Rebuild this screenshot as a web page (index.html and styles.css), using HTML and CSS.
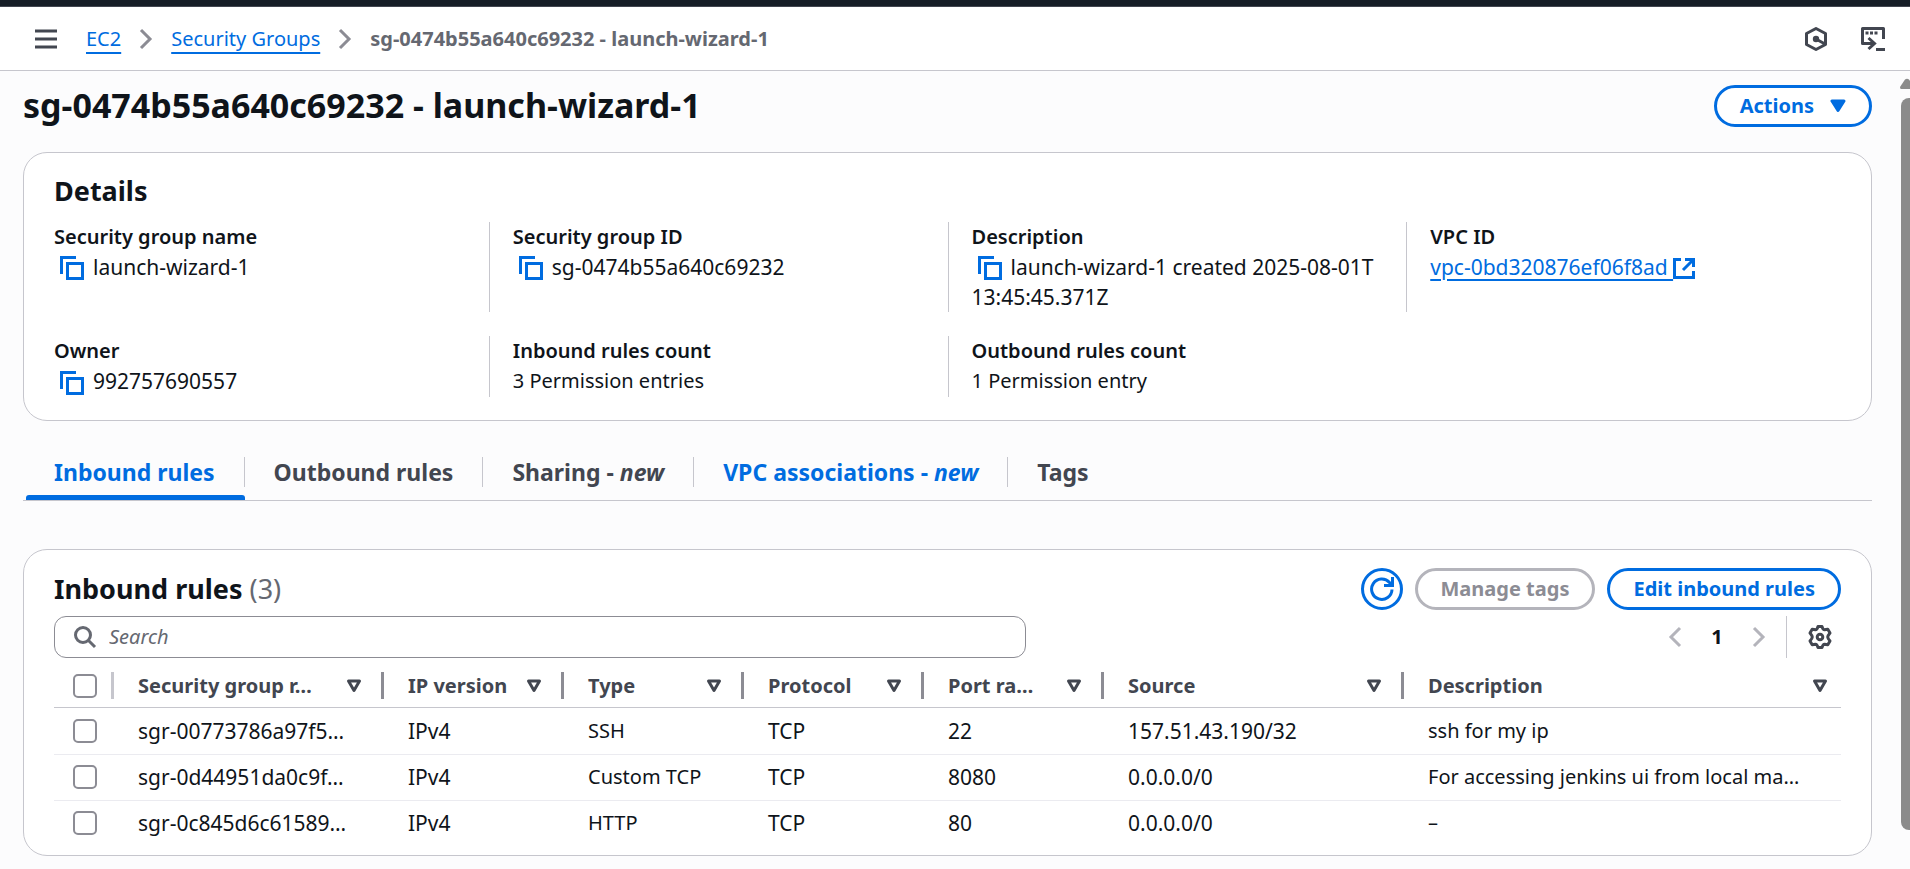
FILE: index.html
```html
<!DOCTYPE html>
<html lang="en">
<head>
<meta charset="utf-8">
<title>sg-0474b55a640c69232 - launch-wizard-1 | EC2</title>
<link rel="stylesheet" href="styles.css">
</head>
<body>
<svg class="defs" aria-hidden="true">
  <symbol id="copy" viewBox="0 0 24 24"><path d="M1.5 18V1.5H16M7.5 7.5H22.5V22.5H7.5Z"/></symbol>
  <symbol id="sort" viewBox="0 0 16 14"><path d="M2.5 2H13.5L8 11.5Z"/></symbol>
</svg>
<div class="topline"></div>
<header class="bar">
  <button class="icon-btn menu" aria-label="Open menu"><svg width="22" height="20" viewBox="0 0 22 20"><path d="M0 2H22M0 10H22M0 18H22"/></svg></button>
  <nav class="crumbs" aria-label="Breadcrumbs">
    <a href="#">EC2</a>
    <svg class="chev" width="14" height="22" viewBox="0 0 14 22"><path d="M2 2L11 11L2 20"/></svg>
    <a href="#">Security Groups</a>
    <svg class="chev" width="14" height="22" viewBox="0 0 14 22"><path d="M2 2L11 11L2 20"/></svg>
    <span class="current">sg-0474b55a640c69232 - launch-wizard-1</span>
  </nav>
  <div class="tools">
    <button class="icon-btn" aria-label="Assistant"><svg class="soft" width="22" height="24" viewBox="0 0 22 24"><path d="M11 1.500L20.500 6.500V17.500L11 22.500L1.500 17.500V6.500ZM11 12L20 17"/><circle class="fill" cx="11" cy="12" r="3.200"/></svg></button>
    <button class="icon-btn" aria-label="CloudShell"><svg class="soft" width="24" height="24" viewBox="0 0 24 24"><path d="M22.500 12V1.500H1.500V16.500H13"/><path class="sharp" d="M7.500 11L13.500 16.500L7.500 22M15 22.500H24"/><path class="sharp" d="M4.500 6H7.500M9 6H12M13.500 6H16.500"/></svg></button>
  </div>
</header>
<div class="body">
<main class="page">
  <div class="title-row">
    <h1>sg-0474b55a640c69232 - launch-wizard-1</h1>
    <button class="btn menu-btn">Actions <svg class="caret" width="16" height="14" viewBox="0 0 16 14"><path d="M2 2H14L8 11.500Z"/></svg></button>
  </div>

  <section class="card details">
    <h2>Details</h2>
    <dl class="grid">
      <div class="item"><dt>Security group name</dt><dd><button class="copy" aria-label="Copy"><svg><use href="#copy"/></svg></button>launch-wizard-1</dd></div>
      <div class="item"><dt>Security group ID</dt><dd><button class="copy" aria-label="Copy"><svg><use href="#copy"/></svg></button>sg-0474b55a640c69232</dd></div>
      <div class="item"><dt>Description</dt><dd><button class="copy" aria-label="Copy"><svg><use href="#copy"/></svg></button>launch-wizard-1 created 2025-08-01T<wbr>13:45:45.371Z</dd></div>
      <div class="item"><dt>VPC ID</dt><dd><a href="#">vpc-0bd320876ef06f8ad <svg class="ext" width="22" height="24" viewBox="0 0 22 24"><path d="M8 2.500H1.500V20.500H20.500V14M12 2.500H20.500V10M20 3L10 13"/></svg></a></dd></div>
      <div class="item"><dt>Owner</dt><dd><button class="copy" aria-label="Copy"><svg><use href="#copy"/></svg></button>992757690557</dd></div>
      <div class="item"><dt>Inbound rules count</dt><dd class="words">3 Permission entries</dd></div>
      <div class="item"><dt>Outbound rules count</dt><dd class="words">1 Permission entry</dd></div>
    </dl>
  </section>

  <div class="tabs" role="tablist">
    <button class="tab active" role="tab" aria-selected="true"><span>Inbound rules</span></button>
    <button class="tab" role="tab"><span>Outbound rules</span></button>
    <button class="tab" role="tab"><span>Sharing - <em>new</em></span></button>
    <button class="tab hover" role="tab"><span>VPC associations - <em>new</em></span></button>
    <button class="tab" role="tab"><span>Tags</span></button>
  </div>

  <section class="card rules">
    <div class="rules-head">
      <h2>Inbound rules <span class="count">(3)</span></h2>
      <div class="actions">
        <button class="btn round" aria-label="Refresh"><svg width="24" height="24" viewBox="0 0 24 24"><path d="M22 12.500A10.200 10.200 0 1 1 19.500 5.500L22 8.500M22.500 0V8.500H14"/></svg></button>
        <button class="btn" disabled>Manage tags</button>
        <button class="btn">Edit inbound rules</button>
      </div>
    </div>
    <div class="filter-row">
      <label class="search">
        <svg width="24" height="24" viewBox="0 0 24 24"><circle cx="10" cy="10" r="7.500"/><path d="M15.500 15.500L22 22"/></svg>
        <input type="search" placeholder="Search" aria-label="Search">
      </label>
      <div class="pager">
        <button class="icon-btn" aria-label="Previous page" disabled><svg width="14" height="22" viewBox="0 0 14 22"><path d="M12 2L3 11L12 20"/></svg></button>
        <button class="num">1</button>
        <button class="icon-btn" aria-label="Next page" disabled><svg width="14" height="22" viewBox="0 0 14 22"><path d="M2 2L11 11L2 20"/></svg></button>
      </div>
      <button class="icon-btn gear" aria-label="Preferences"><svg class="soft" width="24" height="24" viewBox="0 0 24 24"><path d="M10 1.500H14Q15 4.800 16.500 4.800L19.800 4.200L22 8Q19.700 10.700 19.700 12T22 16L19.800 19.800L16.500 19.200Q15 19.200 14 22.500H10Q9 19.200 7.500 19.200L4.200 19.800L2 16Q4.300 13.300 4.300 12T2 8L4.200 4.200L7.500 4.800Q9 4.800 10 1.500Z"/><circle cx="12" cy="12" r="2.800"/></svg></button>
    </div>
    <table>
      <colgroup><col class="c-check"><col class="c-id"><col class="c-s"><col class="c-s"><col class="c-s"><col class="c-s"><col class="c-src"><col></colgroup>
      <thead>
        <tr>
          <th class="check"><div class="th"><input type="checkbox" aria-label="Select all"></div></th>
          <th><div class="th"><span>Security group r…</span><svg><use href="#sort"/></svg></div></th>
          <th><div class="th"><span>IP version</span><svg><use href="#sort"/></svg></div></th>
          <th><div class="th"><span>Type</span><svg><use href="#sort"/></svg></div></th>
          <th><div class="th"><span>Protocol</span><svg><use href="#sort"/></svg></div></th>
          <th><div class="th"><span>Port ra…</span><svg><use href="#sort"/></svg></div></th>
          <th><div class="th"><span>Source</span><svg><use href="#sort"/></svg></div></th>
          <th><div class="th"><span>Description</span><svg><use href="#sort"/></svg></div></th>
        </tr>
      </thead>
      <tbody>
        <tr><td class="check"><input type="checkbox" aria-label="Select rule 1"></td><td>sgr-00773786a97f5…</td><td>IPv4</td><td class="words">SSH</td><td>TCP</td><td>22</td><td>157.51.43.190/32</td><td class="words">ssh for my ip</td></tr>
        <tr><td class="check"><input type="checkbox" aria-label="Select rule 2"></td><td>sgr-0d44951da0c9f…</td><td>IPv4</td><td class="words">Custom TCP</td><td>TCP</td><td>8080</td><td>0.0.0.0/0</td><td class="words">For accessing jenkins ui from local ma…</td></tr>
        <tr><td class="check"><input type="checkbox" aria-label="Select rule 3"></td><td>sgr-0c845d6c61589…</td><td>IPv4</td><td class="words">HTTP</td><td>TCP</td><td>80</td><td>0.0.0.0/0</td><td class="words">–</td></tr>
      </tbody>
    </table>
  </section>
</main>
<div class="scroll" aria-hidden="true"><svg width="10" height="12" viewBox="0 0 10 12"><path d="M0 9L5 1.500Q7 0 9 1.500L10 3V11H1Q0 11 0 9Z"/></svg><div class="thumb"></div></div>
</div>
</body>
</html>
```
FILE: styles.css
```css
* { box-sizing: border-box; }
body {
  margin: 0;
  min-height: 100vh;
  display: flex;
  flex-direction: column;
  overflow: hidden;
  background: #fcfcfd;
  color: #0f141a;
  font: 20px/30px "Noto Sans", "Open Sans", sans-serif;
}
button { font: inherit; color: inherit; background: none; border: 0; padding: 0; cursor: pointer; }
button:disabled { cursor: default; }
h1, h2, dl, dd { margin: 0; }
svg { fill: none; stroke: currentColor; stroke-width: 3; flex: none; }
.soft { stroke-linejoin: round; }
.sharp { stroke-linejoin: miter; }
a { color: #006ce0; text-decoration-thickness: 2px; text-underline-offset: 4px; }
.defs { display: none; }

.topline { height: 7px; background: #161d26; border-bottom: 1px solid #424650; }
.bar {
  display: flex;
  align-items: center;
  height: 64px;
  padding: 0 25px 0 35px;
  background: #fff;
  border-bottom: 1px solid #c6c6cd;
}
.icon-btn { display: flex; color: #424650; }
.crumbs { display: flex; align-items: center; margin-left: 29px; }
.crumbs a { text-underline-offset: 6px; }
.chev { margin: 0 18px; color: #8c8c94; }
.current { color: #656871; font-weight: 700; }
.tools { display: flex; gap: 34px; margin-left: auto; }
.fill { fill: currentColor; stroke: none; }

.body { display: flex; flex: 1; }
.page { flex: 1; min-width: 0; padding: 14px 28px 0 23px; }
.title-row { display: flex; justify-content: space-between; align-items: center; margin-bottom: 25px; }
h1 { font-size: 34px; line-height: 40px; font-weight: 700; padding-bottom: 2px; }
.btn {
  display: flex;
  align-items: center;
  justify-content: center;
  gap: 16px;
  height: 42px;
  padding: 0 23px;
  border: 3px solid #006ce0;
  border-radius: 21px;
  background: #fff;
  color: #006ce0;
  font-weight: 700;
}
.btn:disabled { border-color: #b4b4bb; color: #8c8c94; }
.btn.round { width: 42px; padding: 0; }
.caret path { fill: currentColor; stroke-linejoin: round; }

.card { background: #fff; border: 1px solid #c6c6cd; border-radius: 24px; padding: 18px 30px 0; }
h2 { font-size: 27px; line-height: 42px; font-weight: 700; }
.details { padding-top: 17px; padding-bottom: 23px; }
.grid { display: grid; grid-template-columns: repeat(4, 1fr); gap: 24px 48px; margin-top: 10px; }
.item { position: relative; }
.item:not(:nth-child(4n+1))::before {
  content: "";
  position: absolute;
  left: -24px;
  top: 0;
  bottom: 0;
  border-left: 1px solid #c6c6cd;
}
dt { font-weight: 600; }
dd, td { font-size: 21px; }
.words { font-size: 20px; }
.copy { margin: 0 9px 2px 6px; color: #006ce0; vertical-align: middle; height: 24px; line-height: 0; }
.copy svg { width: 24px; height: 24px; }
.ext { vertical-align: middle; }

.tabs { display: flex; margin-top: 24px; padding-left: 3px; border-bottom: 1px solid #c6c6cd; }
.tab { position: relative; padding: 12px 0 13px; color: #424650; font-size: 23px; font-weight: 700; }
.tab span { display: block; padding: 0 29px; }
.tab:first-child span { padding-left: 28px; }
.tab:not(:last-child) span { border-right: 1px solid #c6c6cd; }
.tab.active, .tab.hover { color: #006ce0; }
.tab.active::after {
  content: "";
  position: absolute;
  left: 0;
  right: 0;
  bottom: 0;
  height: 5px;
  border-radius: 3px 3px 0 0;
  background: #006ce0;
}

.rules { margin-top: 48px; padding-bottom: 9px; }
.rules-head { display: flex; justify-content: space-between; align-items: center; }
.count { color: #656871; font-weight: 400; }
.actions { display: flex; gap: 12px; }
.filter-row { display: flex; align-items: center; margin-top: 6px; height: 42px; }
.search {
  display: flex;
  align-items: center;
  gap: 10px;
  width: 972px;
  height: 42px;
  padding: 0 18px;
  border: 1px solid #8c8c94;
  border-radius: 12px;
  color: #656871;
}
.search input { flex: 1; min-width: 0; border: 0; outline: 0; background: none; font: inherit; }
.search input::placeholder { color: #656871; font-style: italic; opacity: 1; }
.pager { display: flex; align-items: center; gap: 28px; margin-left: auto; padding-right: 20px; }
.pager .icon-btn { color: #b4b4bb; }
.num { width: 14px; font-weight: 700; }
.gear { align-items: center; height: 42px; padding: 0 9px 0 21px; border-left: 1px solid #c6c6cd; }

table { width: 100%; table-layout: fixed; border-collapse: separate; border-spacing: 0; }
.c-check { width: 60px; }
.c-id { width: 270px; }
.c-s { width: 180px; }
.c-src { width: 300px; }
th, td { padding: 0 0 0 24px; text-align: left; white-space: nowrap; }
th { height: 50px; padding: 7px 0 0; border-bottom: 1px solid #c6c6cd; color: #424650; font-weight: 700; }
td { height: 46px; border-bottom: 1px solid #ebebf0; }
tbody tr:first-child td { height: 47px; padding-top: 1px; }
tbody tr:last-child td { height: 45px; border-bottom: 0; }
.th { display: flex; align-items: center; height: 27px; padding: 0 19px 0 24px; border-right: 3px solid #8c8c94; }
th:last-child .th { padding-right: 13px; border-right: 0; }
.th svg { width: 16px; height: 14px; margin-left: auto; stroke-linejoin: round; }
.check { padding-left: 0; }
.check .th { padding: 0; border-color: #c6c6cd; }
input[type="checkbox"] {
  appearance: none;
  display: block;
  flex: none;
  width: 24px;
  height: 24px;
  margin: 0 0 0 19px;
  border: 2px solid #8c8c94;
  border-radius: 5px;
  background: #fff;
}

.scroll { display: flex; flex-direction: column; width: 10px; padding-top: 7px; color: #8b8b8b; }
.scroll svg { fill: currentColor; stroke: none; }
.thumb { width: 9px; height: 732px; margin: 8px 0 0 auto; background: #8b8b8b; border-radius: 8px 0 0 8px; }
```
